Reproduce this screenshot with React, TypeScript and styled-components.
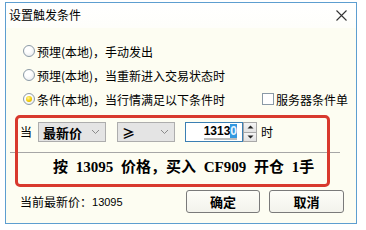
import React from "react";
import styled, { createGlobalStyle } from "styled-components";

const Global = createGlobalStyle`
  html, body { margin: 0; padding: 0; background: #ffffff; overflow: hidden; }
  * { box-sizing: border-box; }
`;

const CJK = `"Noto Sans CJK SC", "Microsoft YaHei", sans-serif`;

const Desktop = styled.div`
  width: 366px;
  height: 230px;
  padding: 2px 0 0 5px;
  background: #ffffff;
`;

const Window = styled.div`
  width: 352px;
  height: 222px;
  border: 1px solid #5d9ed0;
  display: flex;
  flex-direction: column;
  background: #fdfdf2;
  font-family: ${CJK};
  color: #000;
`;

const TitleBar = styled.div`
  height: 25px;
  display: flex;
  align-items: center;
  justify-content: space-between;
  padding: 0 9px 0 3px;
  background: linear-gradient(#ffffff, #fefefa);
`;

const Title = styled.span`
  font-size: 12px;
  line-height: 16px;
  margin-top: -2px;
`;

const Body = styled.div`
  flex: 1;
  position: relative;
  display: flex;
  flex-direction: column;
  padding-top: 11px;
`;

const RadioList = styled.div`
  display: flex;
  flex-direction: column;
  padding: 0 8px 0 17px;
`;

const Row = styled.div`
  height: 24px;
  display: flex;
  align-items: center;
  font-size: 12px;
`;

const RadioCircle = styled.span<{ $on?: boolean }>`
  width: 12px;
  height: 12px;
  border-radius: 50%;
  border: 1px solid #8c9aa6;
  background: radial-gradient(circle at 40% 35%, #ffffff 30%, #e2e6ea 100%);
  display: inline-flex;
  align-items: center;
  justify-content: center;
  margin-right: 2px;
  flex: none;
  &::after {
    content: "";
    display: ${(p) => (p.$on ? "block" : "none")};
    width: 6px;
    height: 6px;
    border-radius: 50%;
    background: radial-gradient(circle at 40% 35%, #fff59a 0%, #f2cc00 55%, #c99a00 100%);
  }
`;

const CheckBox = styled.span`
  width: 12px;
  height: 12px;
  border: 1px solid #8a99a6;
  background: #ffffff;
  margin: 0 2px 0 auto;
  flex: none;
`;

const CondRow = styled.div`
  margin-top: 11px;
  height: 20px;
  display: flex;
  align-items: center;
  padding-left: 14px;
  font-size: 12px;
`;

const Label = styled.span<{ $gap: number }>`
  margin-right: ${(p) => p.$gap}px;
  line-height: 14px;
`;

const Select = styled.div<{ $width: number; $gap: number }>`
  width: ${(p) => p.$width}px;
  height: 20px;
  margin-right: ${(p) => p.$gap}px;
  border: 1px solid #adadad;
  background: #e4e4e4;
  display: flex;
  align-items: center;
  justify-content: space-between;
  padding: 0 5px 0 4px;
  font-size: 13px;
  font-weight: 700;
`;

const SpinInput = styled.div`
  width: 58px;
  height: 20px;
  border: 1px solid #3b7fb3;
  background: #ffffff;
  display: flex;
  align-items: center;
  justify-content: flex-end;
  padding-right: 5px;
  font-family: "Liberation Sans", Arial, sans-serif;
  font-weight: 700;
  font-size: 12px;
`;

const SpinText = styled.span`
  line-height: 14px;
  border-bottom: 2px solid #bcbcbc;
`;

const Selected = styled.span`
  background: #3398e0;
  color: #e8f4ff;
`;

const SpinButtons = styled.div`
  width: 14px;
  height: 20px;
  display: flex;
  flex-direction: column;
  margin-right: 4px;
`;

const SpinButton = styled.div`
  flex: 1;
  border: 1px solid #a8a8a8;
  background: linear-gradient(#f4f4f4, #e2e2e2);
  display: flex;
  align-items: center;
  justify-content: center;
  & + & { border-top: none; }
`;

const Divider = styled.div`
  margin: 10px 0 0 4px;
  width: 330px;
  height: 1px;
  background: #a6a6a6;
`;

const OrderText = styled.div`
  margin-top: 4px;
  height: 20px;
  line-height: 20px;
  padding-left: 47px;
  font-family: "Liberation Serif", ${CJK};
  font-size: 15px;
  font-weight: 700;
  white-space: pre;
  word-spacing: 4px;
`;

const BottomRow = styled.div`
  margin-top: 13px;
  height: 23px;
  display: flex;
  align-items: center;
  gap: 9px;
  padding: 0 12px 0 14px;
`;

const PriceLabel = styled.div`
  flex: 1;
  font-size: 12px;
  display: flex;
  align-items: center;
`;

const PriceNum = styled.span`
  font-family: "Liberation Sans", Arial, sans-serif;
  font-size: 11px;
`;

const Button = styled.button<{ $width: number }>`
  width: ${(p) => p.$width}px;
  height: 23px;
  border: 1px solid #7a7a7a;
  border-radius: 3px;
  background: linear-gradient(#fdfdf8, #f3f3ec);
  font-family: ${CJK};
  font-size: 13px;
  font-weight: 700;
  color: #000;
  padding: 0;
`;

const Highlight = styled.div`
  position: absolute;
  left: 9px;
  top: 87px;
  width: 315px;
  height: 72px;
  border: 3px solid #d8392e;
  border-radius: 5px;
  pointer-events: none;
`;

const Chevron = () => (
  <svg width="9" height="6" viewBox="0 0 9 6">
    <path d="M1 1 L4.5 4.5 L8 1" fill="none" stroke="#8a8a8a" strokeWidth="1" />
  </svg>
);

const Tri = ({ up }: { up?: boolean }) => (
  <svg width="7" height="4" viewBox="0 0 7 4">
    <path d={up ? "M0.5 3.5 L3.5 0.5 L6.5 3.5 Z" : "M0.5 0.5 L3.5 3.5 L6.5 0.5 Z"} fill="#222" />
  </svg>
);

const Close = () => (
  <svg width="11" height="11" viewBox="0 0 11 11">
    <path d="M0.5 0.5 L10.5 10.5 M10.5 0.5 L0.5 10.5" stroke="#333" strokeWidth="1.1" />
  </svg>
);

export default function App() {
  return (
    <Desktop>
      <Global />
      <Window>
        <TitleBar>
          <Title>设置触发条件</Title>
          <Close />
        </TitleBar>
        <Body>
          <RadioList>
            <Row>
              <RadioCircle />
              <span>预埋(本地)，手动发出</span>
            </Row>
            <Row>
              <RadioCircle />
              <span>预埋(本地)，当重新进入交易状态时</span>
            </Row>
            <Row>
              <RadioCircle $on />
              <span>条件(本地)，当行情满足以下条件时</span>
              <CheckBox />
              <span>服务器条件单</span>
            </Row>
          </RadioList>
          <CondRow>
            <Label $gap={6}>当</Label>
            <Select $width={68} $gap={11}>
              <span>最新价</span>
              <Chevron />
            </Select>
            <Select $width={58} $gap={10}>
              <span>≥</span>
              <Chevron />
            </Select>
            <SpinInput>
              <SpinText>
                1313<Selected>0</Selected>
              </SpinText>
            </SpinInput>
            <SpinButtons>
              <SpinButton>
                <Tri up />
              </SpinButton>
              <SpinButton>
                <Tri />
              </SpinButton>
            </SpinButtons>
            <Label $gap={0}>时</Label>
          </CondRow>
          <Divider />
          <OrderText>按 13095 价格，买入 CF909 开仓 1手</OrderText>
          <BottomRow>
            <PriceLabel>
              当前最新价：<PriceNum>13095</PriceNum>
            </PriceLabel>
            <Button $width={74}>确定</Button>
            <Button $width={75}>取消</Button>
          </BottomRow>
          <Highlight />
        </Body>
      </Window>
    </Desktop>
  );
}
